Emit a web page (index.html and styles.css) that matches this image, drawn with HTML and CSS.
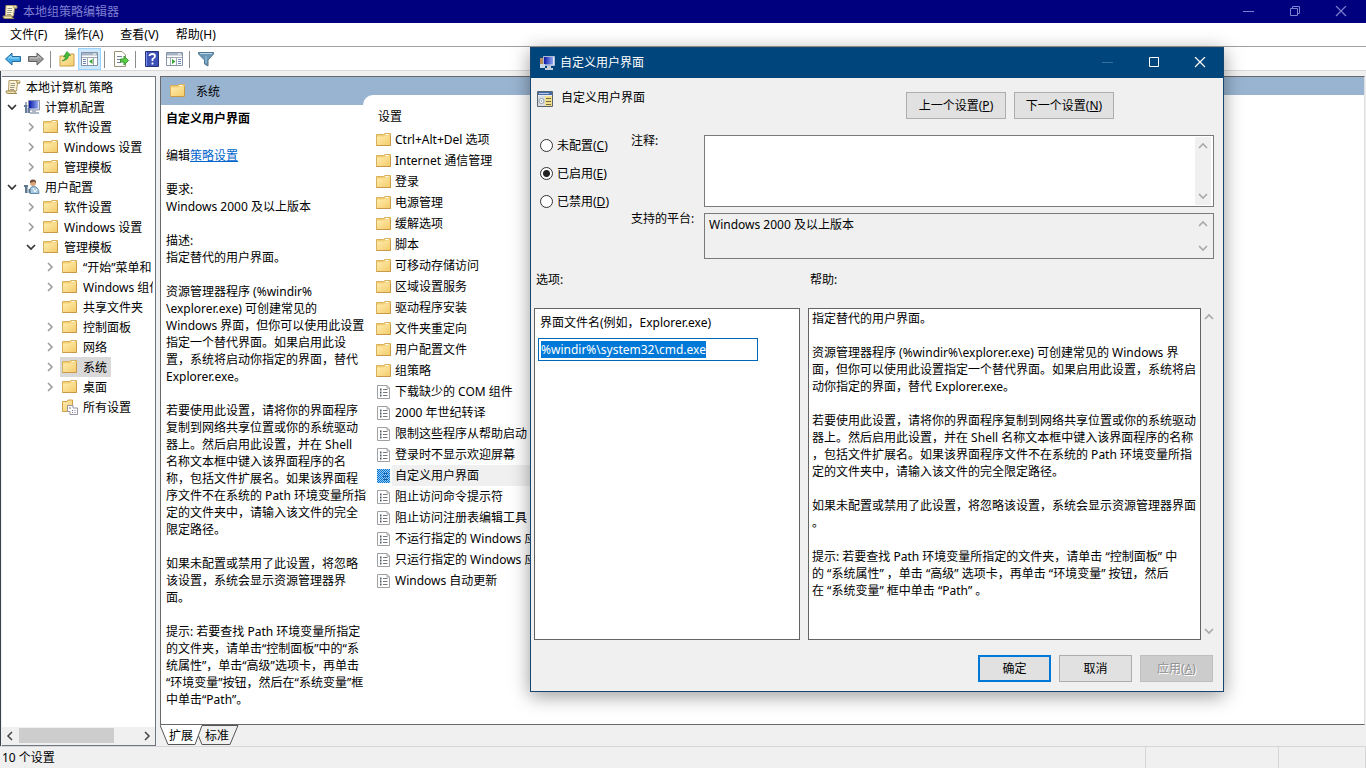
FILE: index.html
```html
<!DOCTYPE html>
<html lang="zh-CN">
<head>
<meta charset="utf-8">
<title>本地组策略编辑器</title>
<link rel="stylesheet" href="styles.css">
</head>
<body>
<svg class="defs" aria-hidden="true">
  <defs>
    <linearGradient id="gold" x1="0" y1="0" x2="1" y2="1"><stop offset="0" stop-color="#ffedb0"/><stop offset="1" stop-color="#f4cc6a"/></linearGradient>
    <linearGradient id="screen" x1="0" y1="0" x2="1" y2="0"><stop offset="0" stop-color="#0a18a8"/><stop offset="1" stop-color="#8fa6f2"/></linearGradient>
    <symbol id="folder" viewBox="0 0 16 16"><path d="M.5 2.500H7.500L9 1.500H14.500V13.500H.5Z" fill="#f3cf73" stroke="#d9b15c"/><path d="M1 4.500H8L9.500 3.500H14V13H1Z" fill="url(#gold)"/><path d="M9.500 2.500H12.500" stroke="#fff"/><path d="M.5 13.500H14.500V4" fill="none" stroke="#c9994a"/></symbol>
    <symbol id="scroll" viewBox="0 0 16 16"><path d="M4 1.500H13.500Q15.500 1.500 15 4H12.500L11.500 12H3.500Z" fill="#fbf3d3" stroke="#b09c69"/><path d="M1 12H10Q9.500 14.500 12 14.500H3Q.8 14.500 1 12ZM12 2Q11 4 12.500 4H15" fill="#efe0ad" stroke="#a18b55"/><path d="M5.500 4.500H10M5.500 6.500H10M5 8.500H9.500M5 10.500H9" stroke="#9a9688"/></symbol>
    <symbol id="computer" viewBox="0 0 16 16"><path d="M4.500 1.500H15.500V11H4.500Z" fill="#d8dde8" stroke="#8d97ab"/><path d="M5 2H14V9.500H5Z" fill="url(#screen)"/><path d="M8 11H12V13H15V15H6V13H8Z" fill="#aeb7c5"/><path d="M0 6H3.500V8H3V14H1V8H0ZM3.500 9H6V14H3.500Z" fill="#657d9b"/><path d="M2 3V6" stroke="#3d5476"/></symbol>
    <symbol id="wizard" viewBox="0 0 16 16"><path d="M4.500 1.500H15.500V10.500H4.500Z" fill="#e3e7f2" stroke="#b0bbd0"/><path d="M5 2H14V9.500H5Z" fill="url(#screen)"/><path d="M8 11H12V13H14V15H6V13H8Z" fill="#c5cedb"/><path d="M1 3H4V10H1Z" fill="#b98a5c"/><path d="M1 9H6V13H1Z" fill="#c9dbe9"/></symbol>
    <symbol id="user" viewBox="0 0 16 16"><path d="M6 14.500Q5 8 9 7.500Q15 7.500 15 14.500Z" fill="#a7cbe2" stroke="#628aa5"/><circle cx="9" cy="4" r="3" fill="#d8a77e"/><path d="M6 4Q5.500 .5 9 .5Q12.500 .5 12 4L10 2.500Z" fill="#704d38"/><path d="M0 6H4V8H3.500V14H1V8H0ZM4.500 10H6.500V14H4.500Z" fill="#5f7890"/><path d="M9 9L11 13L13 10" fill="none" stroke="#fff"/></symbol>
    <symbol id="setting" viewBox="0 0 16 16"><path d="M1.500 1.500H11L13.500 4V14.500H1.500Z" fill="#fff" stroke="#a0a0a0"/><path d="M11 1.500V4H13.500" fill="none" stroke="#a0a0a0"/><path d="M7 5.500H11.500M7 8.500H11.500M7 11.500H11.500" stroke="#72777d"/><path d="M4 4.500H5.500V6.500H4ZM4 7.500H5.500V9.500H4ZM4 10.500H5.500V12.500H4Z" fill="#4b5865"/></symbol>
    <pattern id="dots" width="2" height="2" patternUnits="userSpaceOnUse"><path d="M0 0H1V1H0ZM1 1H2V2H1Z" fill="#0078d7"/></pattern>
    <symbol id="all" viewBox="0 0 16 16"><path d="M.5 2.500H5L6 1H10.500V12.500H.5Z" fill="url(#gold)" stroke="#cfa044"/><path d="M5.500 6.500H11V9H15.500V15.500H8V12.500H5.500Z" fill="#fff" stroke="#9693a2"/><path d="M7 9H9M10 11.500H11M12.500 11.500H13.500M10 13.500H11M12.500 13.500H13.500" stroke="#72729a"/></symbol>
    <symbol id="right" viewBox="0 0 10 10"><path d="M3 1L7 5L3 9" fill="none" stroke="currentColor" stroke-width="1.500"/></symbol>
    <symbol id="left" viewBox="0 0 10 10"><path d="M7 1L3 5L7 9" fill="none" stroke="currentColor" stroke-width="1.500"/></symbol>
    <symbol id="down" viewBox="0 0 10 10"><path d="M1 3L5 7L9 3" fill="none" stroke="currentColor" stroke-width="1.700"/></symbol>
    <symbol id="up" viewBox="0 0 10 10"><path d="M1 7L5 3L9 7" fill="none" stroke="currentColor" stroke-width="1.700"/></symbol>
    <symbol id="min" viewBox="0 0 12 12"><path d="M0 5.500H11" stroke="currentColor"/></symbol>
    <symbol id="max" viewBox="0 0 12 12"><path d="M1.500 .5H10.500V9.500H1.500Z" fill="none" stroke="currentColor"/></symbol>
    <symbol id="restore" viewBox="0 0 12 12"><path d="M1.500 2.500H8.500V9.500H1.500ZM3.500 2V.5H10.500V7.500H9" fill="none" stroke="currentColor"/></symbol>
    <symbol id="close" viewBox="0 0 12 12"><path d="M1 0L11 10M11 0L1 10" stroke="currentColor" stroke-width="1.200"/></symbol>
    <symbol id="tree-view" viewBox="0 0 18 16"><path d="M.5 1.500H16.500V14.500H.5Z" fill="#fff" stroke="#8493a6"/><path d="M1 2H16V4.500H1Z" fill="#a7b4c5"/><path d="M12 3H15" stroke="#fff"/><path d="M1 6.500H16M6.500 7V14M12.500 7V14" stroke="#9da9b7"/><path d="M2 8.500H5M2 10.500H5M2 12.500H5" stroke="#6e86ad"/><path d="M11.500 8V13L8 10.500Z" fill="#35a530"/></symbol>
    <symbol id="pane-view" viewBox="0 0 18 16"><path d="M.5 1.500H16.500V14.500H.5Z" fill="#fff" stroke="#8493a6"/><path d="M1 2H16V4.500H1Z" fill="#a7b4c5"/><path d="M12 3H15" stroke="#fff"/><path d="M1 6.500H16M4.500 7V14M10.500 7V14" stroke="#9da9b7"/><path d="M12 8.500H15M12 10.500H15M12 12.500H15" stroke="#6e86ad"/><path d="M6 8V13L9.500 10.500Z" fill="#35a530"/></symbol>
  </defs>
</svg>

<div class="editor">
  <header class="titlebar">
    <svg class="icon"><use href="#scroll"/></svg>
    <h1>本地组策略编辑器</h1>
    <div class="window-buttons">
      <button aria-label="最小化"><svg><use href="#min"/></svg></button>
      <button aria-label="还原"><svg><use href="#restore"/></svg></button>
      <button aria-label="关闭"><svg><use href="#close"/></svg></button>
    </div>
  </header>
  <nav class="menubar">
    <button>文件(F)</button><button>操作(A)</button><button>查看(V)</button><button>帮助(H)</button>
  </nav>
  <div class="toolbar">
    <button aria-label="后退"><svg class="icon" viewBox="0 0 16 16"><path d="M.5 8L7 2V5.500H15.500V10.500H7V14Z" fill="#45aee6" stroke="#276b9d"/><path d="M3 7.500L6 5V7H14" fill="none" stroke="#a2ddfa"/></svg></button>
    <button aria-label="前进"><svg class="icon" viewBox="0 0 16 16"><path d="M15.500 8L9 2V5.500H.5V10.500H9V14Z" fill="#999" stroke="#5f6163"/><path d="M2 7H10V5L13 7.500" fill="none" stroke="#c9c9c9"/></svg></button>
    <span class="separator"></span>
    <button aria-label="上一级"><svg class="icon" viewBox="0 0 16 16"><path d="M1 5H8L9.500 3H15V15H1Z" fill="url(#gold)" stroke="#c99d47"/><path d="M3 10Q7 8 6.500 5.500L4.500 6L8 .5L11.500 4.500H9.500Q9.500 9 3 10Z" fill="#42bd36" stroke="#258225" stroke-width=".6"/></svg></button>
    <button class="pressed" aria-label="显示/隐藏控制台树"><svg class="wide-icon"><use href="#tree-view"/></svg></button>
    <span class="separator"></span>
    <button aria-label="导出列表"><svg class="icon" viewBox="0 0 16 16"><path d="M1.500 .5H9L12.500 4V15.500H1.500Z" fill="#fff" stroke="#999272"/><path d="M4 5.500H9M4 8.500H8M4 11.500H8" stroke="#777f99"/><path d="M7.500 8H11V5L15.500 9.500L11 14V11H7.500Z" fill="#5bcd48" stroke="#399a30"/></svg></button>
    <span class="separator"></span>
    <button aria-label="帮助"><svg class="icon" viewBox="0 0 16 16"><path d="M1.500 .5H14.500V15.500H1.500Z" fill="#3d50b8" stroke="#26347d"/><path d="M2.500 1V15" stroke="#8194e8"/><path d="M5.500 5Q5.500 3 8.500 3Q11 3 11 5.200Q11 7 8.500 8V10M8.500 11.500V13.500" fill="none" stroke="#fff" stroke-width="1.800"/></svg></button>
    <button aria-label="显示/隐藏操作窗格"><svg class="wide-icon"><use href="#pane-view"/></svg></button>
    <span class="separator"></span>
    <button aria-label="筛选器"><svg class="icon" viewBox="0 0 16 16"><path d="M.5 1.500H15.500V3L10 9V15L6.500 13V9L.5 3Z" fill="#6b98b8" stroke="#51758e"/><path d="M2 2.500H14" stroke="#bfd6e7"/><path d="M8 5V12" stroke="#9dc4de"/></svg></button>
  </div>

  <main class="workspace">
    <aside class="tree-pane">
      <ul class="tree">
        <li class="root"><span class="node"><svg class="icon"><use href="#scroll"/></svg>本地计算机 策略</span></li>
        <li class="open"><svg class="chevron"><use href="#down"/></svg><span class="node"><svg class="icon"><use href="#computer"/></svg>计算机配置</span></li>
        <li class="level-2"><svg class="chevron"><use href="#right"/></svg><span class="node"><svg class="icon"><use href="#folder"/></svg>软件设置</span></li>
        <li class="level-2"><svg class="chevron"><use href="#right"/></svg><span class="node"><svg class="icon"><use href="#folder"/></svg>Windows 设置</span></li>
        <li class="level-2"><svg class="chevron"><use href="#right"/></svg><span class="node"><svg class="icon"><use href="#folder"/></svg>管理模板</span></li>
        <li class="open"><svg class="chevron"><use href="#down"/></svg><span class="node"><svg class="icon"><use href="#user"/></svg>用户配置</span></li>
        <li class="level-2"><svg class="chevron"><use href="#right"/></svg><span class="node"><svg class="icon"><use href="#folder"/></svg>软件设置</span></li>
        <li class="level-2"><svg class="chevron"><use href="#right"/></svg><span class="node"><svg class="icon"><use href="#folder"/></svg>Windows 设置</span></li>
        <li class="level-2 open"><svg class="chevron"><use href="#down"/></svg><span class="node"><svg class="icon"><use href="#folder"/></svg>管理模板</span></li>
        <li class="level-3"><svg class="chevron"><use href="#right"/></svg><span class="node"><svg class="icon"><use href="#folder"/></svg>“开始”菜单和</span></li>
        <li class="level-3"><svg class="chevron"><use href="#right"/></svg><span class="node"><svg class="icon"><use href="#folder"/></svg>Windows 组件</span></li>
        <li class="level-3"><span class="chevron"></span><span class="node"><svg class="icon"><use href="#folder"/></svg>共享文件夹</span></li>
        <li class="level-3"><svg class="chevron"><use href="#right"/></svg><span class="node"><svg class="icon"><use href="#folder"/></svg>控制面板</span></li>
        <li class="level-3"><svg class="chevron"><use href="#right"/></svg><span class="node"><svg class="icon"><use href="#folder"/></svg>网络</span></li>
        <li class="level-3"><svg class="chevron"><use href="#right"/></svg><span class="node selected"><svg class="icon"><use href="#folder"/></svg>系统</span></li>
        <li class="level-3"><svg class="chevron"><use href="#right"/></svg><span class="node"><svg class="icon"><use href="#folder"/></svg>桌面</span></li>
        <li class="level-3"><span class="chevron"></span><span class="node"><svg class="icon"><use href="#all"/></svg>所有设置</span></li>
      </ul>
      <div class="hscroll"><svg><use href="#left"/></svg><div class="track"><div class="thumb"></div></div><svg><use href="#right"/></svg></div>
    </aside>

    <section class="detail">
      <div class="detail-view">
        <div class="info">
          <h2><svg class="icon"><use href="#folder"/></svg>系统</h2>
          <div class="description">
            <h3>自定义用户界面</h3>
            <p>编辑<a href="#policy">策略设置</a></p>
            <p>要求:<br>Windows 2000 及以上版本</p>
            <p>描述:<br>指定替代的用户界面。</p>
            <p>资源管理器程序 (%windir%<br>\explorer.exe) 可创建常见的<br>Windows 界面，但你可以使用此设置<br>指定一个替代界面。如果启用此设<br>置，系统将启动你指定的界面，替代<br>Explorer.exe。</p>
            <p>若要使用此设置，请将你的界面程序<br>复制到网络共享位置或你的系统驱动<br>器上。然后启用此设置，并在 Shell<br>名称文本框中键入该界面程序的名<br>称，包括文件扩展名。如果该界面程<br>序文件不在系统的 Path 环境变量所指<br>定的文件夹中，请输入该文件的完全<br>限定路径。</p>
            <p>如果未配置或禁用了此设置，将忽略<br>该设置，系统会显示资源管理器界<br>面。</p>
            <p>提示: 若要查找 Path 环境变量所指定<br>的文件夹，请单击“控制面板”中的“系<br>统属性”，单击“高级”选项卡，再单击<br>“环境变量”按钮，然后在“系统变量”框<br>中单击“Path”。</p>
          </div>
        </div>
        <div class="list-column">
          <div class="list">
            <h2>设置</h2>
            <ul>
              <li><svg class="icon"><use href="#folder"/></svg>Ctrl+Alt+Del 选项</li>
              <li><svg class="icon"><use href="#folder"/></svg>Internet 通信管理</li>
              <li><svg class="icon"><use href="#folder"/></svg>登录</li>
              <li><svg class="icon"><use href="#folder"/></svg>电源管理</li>
              <li><svg class="icon"><use href="#folder"/></svg>缓解选项</li>
              <li><svg class="icon"><use href="#folder"/></svg>脚本</li>
              <li><svg class="icon"><use href="#folder"/></svg>可移动存储访问</li>
              <li><svg class="icon"><use href="#folder"/></svg>区域设置服务</li>
              <li><svg class="icon"><use href="#folder"/></svg>驱动程序安装</li>
              <li><svg class="icon"><use href="#folder"/></svg>文件夹重定向</li>
              <li><svg class="icon"><use href="#folder"/></svg>用户配置文件</li>
              <li><svg class="icon"><use href="#folder"/></svg>组策略</li>
              <li><svg class="icon"><use href="#setting"/></svg>下载缺少的 COM 组件</li>
              <li><svg class="icon"><use href="#setting"/></svg>2000 年世纪转译</li>
              <li><svg class="icon"><use href="#setting"/></svg>限制这些程序从帮助启动</li>
              <li><svg class="icon"><use href="#setting"/></svg>登录时不显示欢迎屏幕</li>
              <li class="selected"><svg class="icon" viewBox="0 0 16 16"><use href="#setting"/><path d="M1 1H14V15H1Z" fill="#99c9ef"/><path d="M1 1H14V15H1Z" fill="url(#dots)"/><path d="M7 5.500H12M7 8.500H12M7 11.500H12" stroke="#1a5f9e"/></svg>自定义用户界面</li>
              <li><svg class="icon"><use href="#setting"/></svg>阻止访问命令提示符</li>
              <li><svg class="icon"><use href="#setting"/></svg>阻止访问注册表编辑工具</li>
              <li><svg class="icon"><use href="#setting"/></svg>不运行指定的 Windows 应用程序</li>
              <li><svg class="icon"><use href="#setting"/></svg>只运行指定的 Windows 应用程序</li>
              <li><svg class="icon"><use href="#setting"/></svg>Windows 自动更新</li>
            </ul>
          </div>
        </div>
      </div>
      <div class="view-tabs">
        <svg class="tab-lines" viewBox="0 0 80 21"><path d="M0 0L8 19.500H35L42 0Z" fill="#fff"/><path d="M0 0L8 19.500H35L42 .5H78L70 19.500H42L38.500 11" fill="none" stroke="#555"/></svg>
        <button>扩展</button><button>标准</button>
      </div>
    </section>
  </main>
  <footer class="statusbar"><span>10 个设置</span><span></span><span></span></footer>
</div>

<section class="dialog" role="dialog" aria-labelledby="dialog-title">
  <header class="dialog-title">
    <svg class="icon"><use href="#wizard"/></svg>
    <h2 id="dialog-title">自定义用户界面</h2>
    <div class="window-buttons">
      <button class="dim" aria-label="最小化" disabled><svg><use href="#min"/></svg></button>
      <button aria-label="最大化"><svg><use href="#max"/></svg></button>
      <button aria-label="关闭"><svg><use href="#close"/></svg></button>
    </div>
  </header>
  <form class="dialog-body">
    <div class="heading">
      <svg class="icon" viewBox="0 0 16 16"><path d="M.5 .5H15.500V15.500H.5Z" fill="#eee" stroke="#5a6572"/><path d="M1 1H15V4H1Z" fill="#456aa5"/><path d="M2 2.500H12" stroke="#b7c8e9"/><path d="M1 5H8V15H1Z" fill="#d9dce0"/><path d="M8 5H15V15H8Z" fill="#f2df8c"/><path d="M9 7.500H14M9 10.500H14M9 13.500H14" stroke="#756b42"/><circle cx="4.500" cy="10" r="2.500" fill="#fff" stroke="#929aa3"/><path d="M3.500 9.500H5.500L4.500 11Z" fill="#3d76b0"/></svg>
      <span>自定义用户界面</span>
      <div class="pager"><button type="button">上一个设置(<u>P</u>)</button><button type="button">下一个设置(<u>N</u>)</button></div>
    </div>
    <div class="state">
      <div class="radios">
        <label><input type="radio" name="state">未配置(<u>C</u>)</label>
        <label><input type="radio" name="state" checked>已启用(<u>E</u>)</label>
        <label><input type="radio" name="state">已禁用(<u>D</u>)</label>
      </div>
      <div class="fields">
        <label for="comment">注释:</label>
        <div class="memo tall"><textarea id="comment"></textarea><div class="vscroll"><svg><use href="#up"/></svg><svg><use href="#down"/></svg></div></div>
        <label for="platform">支持的平台:</label>
        <div class="memo short"><textarea id="platform" readonly>Windows 2000 及以上版本</textarea><div class="vscroll"><svg><use href="#up"/></svg><svg><use href="#down"/></svg></div></div>
      </div>
    </div>
    <div class="panels">
      <h3>选项:</h3>
      <h3>帮助:</h3>
      <div class="options">
        <label for="shell">界面文件名(例如，Explorer.exe)</label>
        <input id="shell" type="text" value="%windir%\system32\cmd.exe" spellcheck="false">
      </div>
      <div class="help">
        <div class="help-text">
          <p>指定替代的用户界面。</p>
          <p>资源管理器程序 (%windir%\explorer.exe) 可创建常见的 Windows 界<br>面，但你可以使用此设置指定一个替代界面。如果启用此设置，系统将启<br>动你指定的界面，替代 Explorer.exe。</p>
          <p>若要使用此设置，请将你的界面程序复制到网络共享位置或你的系统驱动<br>器上。然后启用此设置，并在 Shell 名称文本框中键入该界面程序的名称<br>，包括文件扩展名。如果该界面程序文件不在系统的 Path 环境变量所指<br>定的文件夹中，请输入该文件的完全限定路径。</p>
          <p>如果未配置或禁用了此设置，将忽略该设置，系统会显示资源管理器界面<br>。</p>
          <p>提示: 若要查找 Path 环境变量所指定的文件夹，请单击 “控制面板” 中<br>的 “系统属性” ，单击 “高级” 选项卡，再单击 “环境变量” 按钮，然后<br>在 “系统变量” 框中单击 “Path” 。</p>
        </div>
        <div class="vscroll"><svg><use href="#up"/></svg><svg><use href="#down"/></svg></div>
      </div>
    </div>
    <div class="actions">
      <button type="button" class="default">确定</button><button type="button">取消</button><button type="button" disabled>应用(<u>A</u>)</button>
    </div>
  </form>
</section>
<script src="app.js"></script>
</body>
</html>
```
FILE: styles.css
```css
* { box-sizing: border-box; }
body {
  margin: 0;
  font: 12px/17px "Noto Sans", "Noto Sans CJK SC", sans-serif;
  color: #000;
  background: #f0f0f0;
  overflow: hidden;
}
h1, h2, h3, p, ul { margin: 0; padding: 0; font-size: 12px; font-weight: 400; list-style: none; }
button, input, textarea { font: inherit; color: inherit; }
button { border: 0; padding: 0; background: none; }
svg { display: block; flex: none; }
.defs { position: absolute; width: 0; height: 0; }
.icon { width: 16px; height: 16px; }
.wide-icon { width: 18px; height: 16px; }

.editor { display: flex; flex-direction: column; height: 100vh; }
.titlebar { display: flex; align-items: center; gap: 5px; height: 23px; padding-left: 2px; background: #00007f; color: #7f7fd0; }
.window-buttons { display: flex; margin-left: auto; }
.window-buttons button { display: grid; place-items: center; width: 46px; height: 22px; }
.window-buttons svg { width: 12px; height: 12px; }
.titlebar .window-buttons { padding-right: 2px; }

.menubar { display: flex; gap: 17px; height: 24px; padding-left: 10px; background: #fff; border-bottom: 1px solid #a0a0a0; }
.toolbar { display: flex; align-items: center; height: 24px; padding: 1px 0 0 1px; background: #fff; border-bottom: 1px solid #d9d9d9; }
.toolbar button { display: grid; place-items: center; width: 23px; height: 22px; }
.toolbar .pressed { background: #cce8ff; border: 1px solid #99d1ff; }
.separator { width: 1px; height: 17px; margin: 0 4px 0 3px; background: #8d8d8d; }

.workspace { flex: 1; display: grid; grid-template-columns: 154px minmax(0, 1fr); gap: 4px; min-height: 0; padding: 5px 1px 0; border-left: 1px solid #3c4350; }
.tree-pane { display: flex; flex-direction: column; min-height: 0; background: #fff; border: 1px solid #70767f; border-left: 0; overflow: hidden; }
.tree { flex: 1; margin-right: 2px; overflow: hidden; }
.tree li { display: flex; align-items: center; gap: 2px; height: 20px; padding-left: 5px; white-space: nowrap; }
.tree .root { padding-left: 1px; }
.tree .level-2 { padding-left: 24px; }
.tree .level-3 { padding-left: 43px; }
.chevron { flex: none; width: 10px; height: 10px; margin-right: 3px; color: #999; }
.open .chevron { color: #333; }
.node { display: flex; align-items: center; gap: 5px; height: 20px; padding: 0 4px 0 2px; }
.node.selected { background: #d9d9d9; }
.hscroll { display: flex; align-items: center; height: 18px; padding: 0 3px 1px; background: #f0f0f0; color: #444; }
.hscroll svg { width: 10px; height: 10px; }
.track { flex: 1; padding: 0 4px; }
.thumb { width: 80%; height: 15px; background: #cdcdcd; }

.detail { display: flex; flex-direction: column; min-width: 0; min-height: 0; }
.detail-view { flex: 1; display: grid; grid-template-columns: 202px minmax(0, 1fr); min-height: 0; background: #fff; border: 1px solid #696969; border-right-color: #ddd; overflow: hidden; }
.info h2 { display: flex; align-items: center; gap: 10px; height: 28px; padding-left: 9px; background: #99b4d1; }
.description { position: relative; z-index: 1; padding: 5px 0 0 5px; white-space: nowrap; }
.description h3 { margin-bottom: 20px; font-weight: 700; }
.description p + p { margin-top: 17px; }
.description a { color: #0066cc; }
.list-column { padding-top: 18px; background: linear-gradient(#99b4d1 28px, #fff 28px); }
.list { height: 100%; padding: 8px 0 0 13px; background: #fff; border-top-left-radius: 10px; }
.list h2 { height: 26px; padding: 5px 0 0 2px; }
.list li { display: flex; align-items: center; gap: 3px; height: 21px; white-space: nowrap; }
.list ul { max-width: 400px; }
.list .selected { background: linear-gradient(90deg, #fff 16px, #f0f0f0 16px); }
.view-tabs { position: relative; display: flex; gap: 12px; height: 21px; padding-left: 9px; }
.view-tabs button { position: relative; }
.tab-lines { position: absolute; left: 0; top: 0; width: 80px; height: 21px; }
.statusbar { display: grid; grid-template-columns: minmax(0, 1fr) 133px 87px; height: 22px; border-top: 1px solid #d7d7d7; }
.statusbar span { padding: 2px; border-right: 1px solid #d7d7d7; }

.dialog { position: absolute; left: 530px; top: 47px; width: 694px; background: #f0f0f0; border: 1px solid #17456f; box-shadow: 0 4px 18px rgba(0, 0, 0, .4); }
.dialog-title { display: flex; align-items: center; gap: 5px; height: 30px; padding: 0 0 1px 8px; background: #00457c; color: #fff; }
.dialog-title .dim { color: #32709f; }
.dialog-body { padding: 13px 9px 9px 3px; }
.heading { display: flex; align-items: flex-start; gap: 8px; height: 44px; padding-left: 3px; }
.heading span { margin-top: -2px; }
.pager { display: flex; gap: 8px; margin: 1px 100px 0 auto; }
.dialog-body button { width: 73px; height: 27px; background: #e1e1e1; border: 1px solid #adadad; }
.dialog-body .pager button { width: 100px; }
.dialog-body .default { border: 2px solid #0078d7; }
.dialog-body button:disabled { background: #ccc; border-color: #bfbfbf; color: #929292; text-shadow: 1px 1px #fff; }
.state { display: grid; grid-template-columns: 97px minmax(0, 1fr); }
.radios { padding: 2px 0 0 6px; white-space: nowrap; }
.radios label { display: flex; align-items: center; height: 17px; margin-bottom: 11px; }
.radios input { appearance: none; width: 13px; height: 13px; margin: 0 4px 0 0; border: 1px solid #333; border-radius: 50%; background: #fff; }
.radios input:checked { background: radial-gradient(circle, #222 3px, #fff 4px); }
.fields { display: grid; grid-template-columns: 73px minmax(0, 1fr); row-gap: 6px; line-height: 12px; }
.fields label { white-space: nowrap; }
.memo { display: flex; border: 1px solid #7a7a7a; padding: 1px 2px 1px 1px; }
.memo textarea { flex: 1; min-width: 0; height: 100%; padding: 1px 3px; border: 0; outline: 0; background: none; line-height: 17px; resize: none; overflow: hidden; }
.tall { height: 72px; background: #fff; }
.short { height: 46px; }
.vscroll { display: flex; flex-direction: column; justify-content: space-between; align-items: center; width: 16px; padding: 4px 0; background: #f0f0f0; color: #aaa; }
.vscroll svg { width: 10px; height: 10px; }
.panels { display: grid; grid-template-columns: 266px minmax(0, 1fr); column-gap: 8px; grid-template-rows: 37px 332px; padding-top: 12px; }
.panels h3 { padding-left: 2px; }
.options { padding: 5px 3px; background: #fff; border: 1px solid #646464; }
.options label { display: block; margin-bottom: 7px; padding-left: 2px; }
.options input { display: block; width: 220px; height: 23px; padding: 0 2px; border: 1px solid #0067b8; outline: 0; background: #fff; }
.options input::selection { background: #0078d7; color: #fff; }
.help { display: flex; margin-right: -3px; }
.help-text { flex: 1; min-width: 0; padding: 1px 3px; background: #fff; border: 1px solid #646464; white-space: nowrap; overflow: hidden; }
.help-text p + p { margin-top: 17px; }
.actions { display: flex; justify-content: flex-end; gap: 8px; padding-top: 15px; padding-right: 1px; }
```
FILE: app.js
```js
const shell = document.getElementById("shell");
shell.focus();
shell.select();
```
